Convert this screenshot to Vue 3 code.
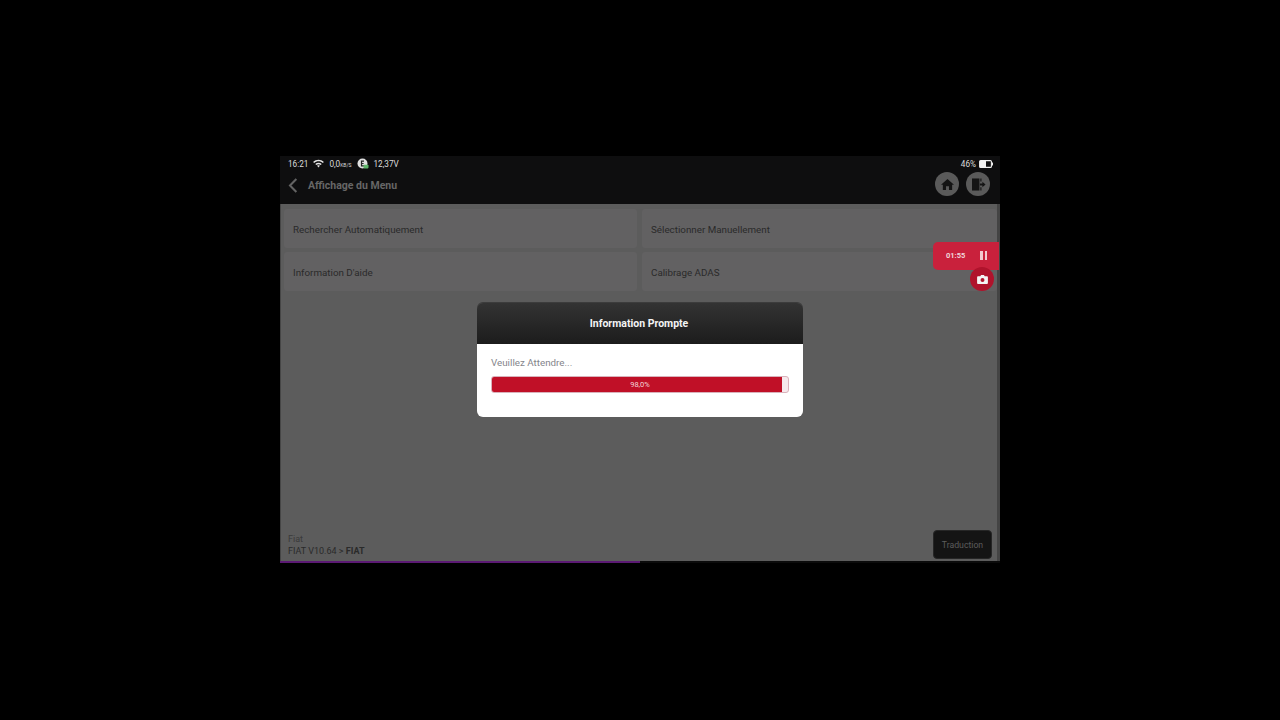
<script setup>
const items = ['Rechercher Automatiquement', 'Sélectionner Manuellement', "Information D'aide", 'Calibrage ADAS']
const progress = 98
</script>

<template>
  <div class="page">
    <div class="screen">
      <header class="top">
        <div class="status">
          <div class="status-left">
            <span>16:21</span>
            <svg class="wifi" viewBox="0 0 12 10" width="11" height="9">
              <path fill="#e4e4e4" d="M0 3.2C3.4 0 8.6 0 12 3.2L10.8 4.5C8 2 4 2 1.2 4.5Z" />
              <path fill="#e4e4e4" d="M2.4 5.5C4.5 3.6 7.5 3.6 9.6 5.5L8.4 6.7C7 5.5 5 5.5 3.6 6.7Z" />
              <path fill="#e4e4e4" d="M4.5 7.6C5.4 6.9 6.6 6.9 7.5 7.6L6 9.4Z" />
            </svg>
            <span class="speed">0,0<small>KB/S</small></span>
            <svg class="vci" viewBox="0 0 12 12" width="12" height="12">
              <circle cx="5.5" cy="5.5" r="5" fill="#e0e0e0" />
              <path d="M7 3.2H4.5V7.8H7M4.5 5.5H6.6" fill="none" stroke="#222" stroke-width="1.2" />
              <rect x="6.5" y="6.8" width="5" height="3.6" rx="0.8" fill="#5fb56a" />
            </svg>
            <span>12,37V</span>
          </div>
          <div class="status-right">
            <span>46%</span>
            <svg viewBox="0 0 14 8" width="14" height="8">
              <rect x="0.6" y="0.6" width="11.8" height="6.8" rx="1" fill="#0e0e0f" stroke="#f0f0f0" stroke-width="1.1" />
              <rect x="1" y="1" width="6" height="6" fill="#f0f0f0" />
              <rect x="12.8" y="2.5" width="1.2" height="3" fill="#f0f0f0" />
            </svg>
          </div>
        </div>
        <div class="nav">
          <div class="nav-left">
            <svg viewBox="0 0 10 16" width="10" height="15">
              <path d="M8.6 1 L1.8 8 L8.6 15" fill="none" stroke="#636363" stroke-width="2.2" />
            </svg>
            <span class="title">Affichage du Menu</span>
          </div>
          <div class="nav-right">
            <div class="round">
              <svg viewBox="0 0 14 14" width="13" height="13">
                <path fill="#141414" d="M7 1 L14 7.4 H12 V13 H8.6 V9 H5.4 V13 H2 V7.4 H0 Z" />
              </svg>
            </div>
            <div class="round">
              <svg viewBox="0 0 16 14" width="15" height="13">
                <path fill="#141414" d="M1 0.5H9V13.5H1Z" />
                <path fill="#141414" d="M10 0.5H11.2V3.8H10ZM10 10H11.2V13.5H10Z" />
                <path fill="#141414" d="M9.5 6H12.2V4L15.6 7L12.2 10V8H9.5Z" />
              </svg>
            </div>
          </div>
        </div>
      </header>

      <main class="content">
        <div class="grid">
          <div v-for="item in items" :key="item" class="item">{{ item }}</div>
        </div>
        <footer class="foot">
          <div class="crumb">
            <div>Fiat</div>
            <div>FIAT V10.64 &gt; <b>FIAT</b></div>
          </div>
          <div class="translate">Traduction</div>
        </footer>
      </main>
      <div class="underline"><div class="underline-fill"></div></div>

      <div class="recorder">
        <span class="time">01:55</span>
        <span class="pause"><i></i><i></i></span>
      </div>
      <div class="camera">
        <svg viewBox="0 0 12 10" width="11" height="9">
          <path fill="#f4f4f4" d="M1 1.5H3.5L4.4 0H7.6L8.5 1.5H11A1 1 0 0 1 12 2.5V9A1 1 0 0 1 11 10H1A1 1 0 0 1 0 9V2.5A1 1 0 0 1 1 1.5Z" />
          <circle cx="6" cy="5.6" r="2.2" fill="#b0132c" />
        </svg>
      </div>

      <div class="dialog">
        <div class="dialog-head">Information Prompte</div>
        <div class="dialog-body">
          <div class="wait">Veuillez Attendre...</div>
          <div class="bar">
            <div class="bar-fill" :style="{ width: progress + '%' }"></div>
            <span class="bar-label">98,0%</span>
          </div>
        </div>
      </div>
    </div>
  </div>
</template>

<style>
html, body { margin: 0; background: #000; }
</style>

<style scoped>
.page {
  width: 1280px;
  height: 720px;
  background: #000;
  display: flex;
  align-items: center;
  justify-content: center;
  font-family: Roboto, "Liberation Sans", sans-serif;
  overflow: hidden;
}
.screen {
  position: relative;
  width: 720px;
  height: 407px;
  display: flex;
  flex-direction: column;
  margin-top: -1px;
}
.top {
  height: 48px;
  background: #0e0e0f;
  flex: none;
}
.status {
  height: 15px;
  padding: 0 8px;
  display: flex;
  justify-content: space-between;
  align-items: center;
  color: #dcdcdc;
  font-size: 8.2px;
}
.status-left { display: flex; align-items: center; }
.wifi { margin: 0 5px 0 5px; }
.speed small { font-size: 5px; }
.vci { margin: 0 5px 0 5px; }
.status-right { display: flex; align-items: center; gap: 3px; margin-right: -1px; }
.nav {
  height: 26px;
  display: flex;
  justify-content: space-between;
  align-items: center;
  padding: 0 10px 0 8px;
}
.nav-left { display: flex; align-items: center; gap: 10px; margin-top: 2px; }
.title { color: #666; font-size: 10.5px; font-weight: 700; }
.nav-right { display: flex; gap: 7px; }
.round {
  width: 24px;
  height: 24px;
  border-radius: 50%;
  background: #5a5a5a;
  display: flex;
  align-items: center;
  justify-content: center;
}
.content {
  flex: 1;
  background: #5c5c5c;
  display: flex;
  flex-direction: column;
  justify-content: space-between;
  border-left: 1px solid #464646;
  border-right: 3px solid #444;
  padding: 5px 0 0 3px;
}
.grid {
  display: grid;
  grid-template-columns: 353px 355px;
  grid-auto-rows: 39px;
  gap: 4px 5px;
}
.item {
  background: #626162;
  border-radius: 3px;
  padding: 1px 0 0 9px;
  box-sizing: border-box;
  display: flex;
  align-items: center;
  color: #2a2a2a;
  font-size: 9.8px;
}
.foot {
  display: flex;
  justify-content: space-between;
  align-items: flex-end;
  padding: 0 5px 2px 4px;
}
.crumb { color: #2a2a2a; font-size: 9px; line-height: 12px; margin-bottom: 2px; }
.crumb div:first-child { color: #3a3a3a; }
.translate {
  width: 59px;
  height: 29px;
  box-sizing: border-box;
  border: 1px solid #262626;
  border-radius: 4px;
  background: #141414;
  color: #5c5c5c;
  font-size: 8.7px;
  display: flex;
  align-items: center;
  justify-content: center;
}
.underline { height: 2px; background: #0b0b0b; flex: none; }
.underline-fill { width: 360px; height: 2px; background: #5b1a73; }
.recorder {
  position: absolute;
  top: 86px;
  right: 1px;
  width: 66px;
  height: 28px;
  border-radius: 5px 0 0 5px;
  background: #c9213c;
  display: flex;
  align-items: center;
  justify-content: space-between;
  box-sizing: border-box;
  padding: 0 12px 2px 13px;
}
.time { color: #f0d6da; font-size: 7.5px; font-weight: 700; }
.pause { display: flex; gap: 2px; }
.pause i { width: 2.5px; height: 9px; background: #f2c8cf; display: block; }
.camera {
  position: absolute;
  top: 111px;
  left: 690px;
  width: 24px;
  height: 24px;
  border-radius: 50%;
  background: #b0132c;
  display: flex;
  align-items: center;
  justify-content: center;
}
.dialog {
  position: absolute;
  top: 147px;
  left: 197px;
  width: 326px;
  border-radius: 6px;
  overflow: hidden;
  box-shadow: 0 -1px 0 #3c3c3c;
}
.dialog-head {
  height: 41px;
  background: linear-gradient(#333, #1c1c1c);
  color: #f4f4f4;
  font-size: 10.5px;
  font-weight: 700;
  display: flex;
  align-items: center;
  justify-content: center;
  padding-right: 2px;
}
.dialog-body {
  background: #fff;
  height: 73px;
  padding: 13px 14px 0;
  box-sizing: border-box;
}
.wait { color: #85858b; font-size: 9.8px; line-height: 12px; padding-bottom: 1px; }
.bar {
  position: relative;
  margin-top: 6px;
  width: 298px;
  height: 17px;
  box-sizing: border-box;
  border: 1px solid #d9b2bb;
  border-radius: 3px;
  background: #f6e9ec;
  overflow: hidden;
}
.bar-fill { height: 100%; background: #c01027; }
.bar-label {
  position: absolute;
  inset: 0;
  display: flex;
  align-items: center;
  justify-content: center;
  color: #f3d5da;
  font-size: 7.5px;
}
</style>
